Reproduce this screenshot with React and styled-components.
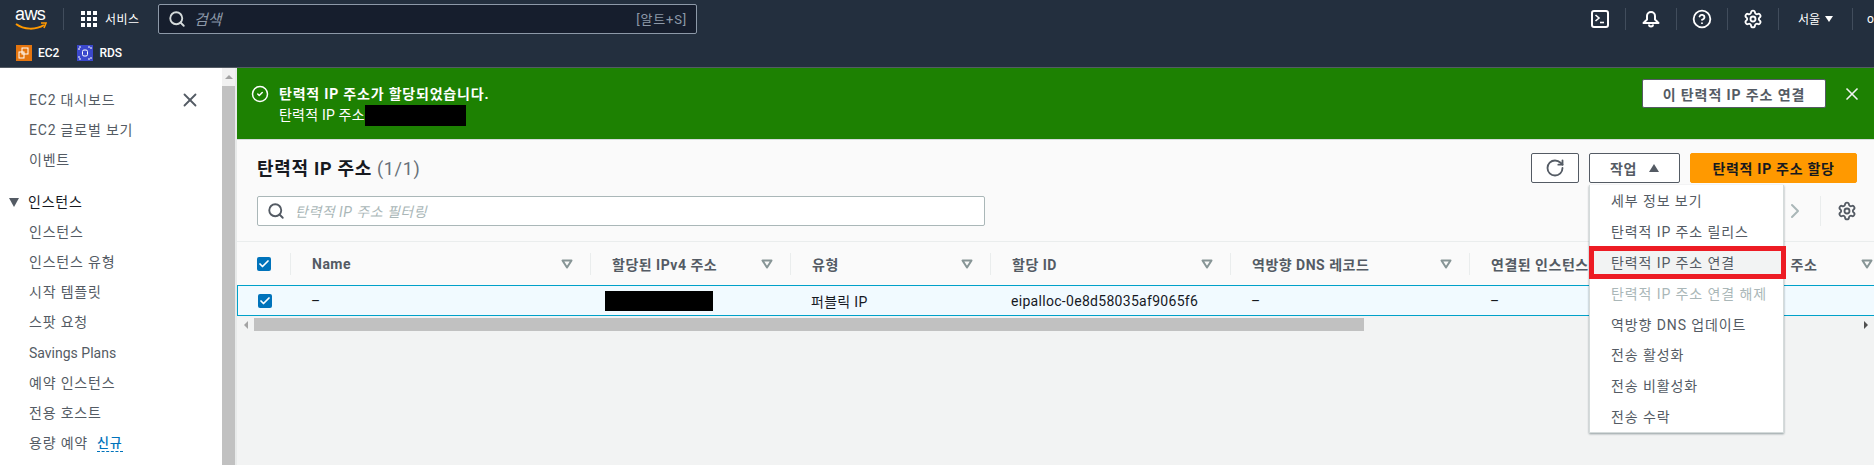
import React from "react";
import styled, { createGlobalStyle } from "styled-components";
import { Check, CircleCheck, Search, X, RotateCw, ChevronRight, Settings, CircleHelp } from "lucide-react";

const FONT = `"Roboto", "Noto Sans CJK KR", sans-serif`;
const COLUMNS = "54px 300px 200px 200px 240px 239px 224px 197px";

const Global = createGlobalStyle`
  html, body { margin: 0; padding: 0; background: #f2f3f3; overflow: hidden; }
  body { font-family: ${FONT}; font-size: 14px; color: #16191f; }
  * { box-sizing: border-box; }
`;

const Page = styled.div`
  width: 1874px;
  height: 465px;
  display: flex;
  flex-direction: column;
  overflow: hidden;
`;

/* ---------- top navigation ---------- */
const Header = styled.header`
  height: 68px;
  flex: none;
  background: #232f3e;
  display: flex;
  flex-direction: column;
`;
const TopRow = styled.div`
  height: 37px;
  display: flex;
  align-items: center;
  padding-left: 15px;
  color: #fff;
`;
const Logo = styled.div`
  position: relative;
  width: 33px;
  height: 28px;
  font: 400 18px/18px "Liberation Sans", sans-serif;
  letter-spacing: -0.6px;
  color: #fff;
  & svg { position: absolute; left: 0; top: 17px; }
`;
const VSep = styled.span`
  width: 1px;
  height: 22px;
  background: #414d5c;
  flex: none;
`;
const Grid9 = styled.div`
  display: grid;
  grid-template-columns: repeat(3, 4px);
  gap: 2px;
  margin: 0 8px 0 17px;
  & i { width: 4px; height: 4px; background: #fff; display: block; }
`;
const ServiceLabel = styled.span`
  font-size: 12px;
  letter-spacing: 0.5px;
  width: 36px;
  white-space: nowrap;
`;
const SearchBox = styled.div`
  width: 539px;
  height: 30px;
  margin-left: 17px;
  background: #161e2d;
  border: 1px solid #8d99a8;
  border-radius: 2px;
  display: flex;
  align-items: center;
  padding: 0 9px 0 9px;
`;
const SearchHint = styled.span`
  font-style: italic;
  font-size: 15px;
  color: #8d99a8;
  margin-left: 8px;
  flex: 1;
`;
const Shortcut = styled.span`
  font-size: 13px;
  color: #8d99a8;
  letter-spacing: 0.8px;
`;
const RightNav = styled.div`
  margin-left: auto;
  display: flex;
  align-items: center;
`;
const NavIcon = styled.span`
  width: 50px;
  display: flex;
  justify-content: center;
  align-items: center;
`;
const Region = styled.span`
  width: 73px;
  display: flex;
  align-items: center;
  justify-content: center;
  gap: 5px;
  font-size: 12px;
  & i {
    width: 0; height: 0;
    border-left: 4px solid transparent;
    border-right: 4px solid transparent;
    border-top: 6px solid #fff;
  }
`;
const Account = styled.span`
  width: 21px;
  font-size: 12px;
  padding-left: 14px;
  overflow: hidden;
  color: #fff;
`;
const BottomRow = styled.div`
  flex: 1;
  display: flex;
  align-items: center;
  padding-left: 16px;
  gap: 6px;
  color: #fff;
  font-size: 12px;
  font-weight: 500;
`;
const ServiceTile = styled.span`
  width: 16px;
  height: 16px;
  background: ${(p) => p.$bg};
  display: flex;
  align-items: center;
  justify-content: center;
  flex: none;
`;
const ServiceName = styled.span`
  margin-right: ${(p) => p.$mr || 0}px;
`;

/* ---------- body ---------- */
const Body = styled.div`
  flex: 1;
  display: flex;
  min-height: 0;
  border-top: 1px solid #545b64;
  margin-top: -1px;
`;
const Sidebar = styled.aside`
  width: 222px;
  flex: none;
  background: #fff;
  position: relative;
  padding: 17px 0 0 29px;
  color: #545b64;
  letter-spacing: 0.8px;
`;
const SideClose = styled.span`
  position: absolute;
  left: 179px;
  top: 21px;
  color: #545b64;
  display: flex;
`;
const SideItem = styled.div`
  height: 30.2px;
  line-height: 30px;
  white-space: nowrap;
  display: flex;
  align-items: center;
  letter-spacing: ${(p) => (p.$latin ? "0" : "inherit")};
`;
const SideGap = styled.div`
  height: 11px;
`;
const SideHead = styled(SideItem)`
  color: #16191f;
  position: relative;
  margin-left: -1px;
  & i {
    position: absolute;
    left: -19px;
    top: 11px;
    border-left: 5.5px solid transparent;
    border-right: 5.5px solid transparent;
    border-top: 9px solid #545b64;
  }
`;
const NewTag = styled.span`
  color: #0073bb;
  font-weight: 500;
  font-size: 13px;
  margin-left: 9px;
  border-bottom: 1px dashed #0073bb;
  line-height: 17px;
`;
const ScrollTrack = styled.div`
  width: 15px;
  flex: none;
  background: #fff;
  border-right: 2px solid #e8eaea;
  display: flex;
  flex-direction: column;
  align-items: flex-start;
`;
const ScrollUp = styled.span`
  height: 18px;
  width: 13px;
  background: #f1f1f1;
  display: flex;
  align-items: center;
  justify-content: center;
  & i {
    border-left: 4px solid transparent;
    border-right: 4px solid transparent;
    border-bottom: 4px solid #a3a3a3;
  }
`;
const ScrollThumb = styled.span`
  flex: 1;
  width: 13px;
  background: #c1c1c1;
`;

const Main = styled.main`
  flex: 1;
  min-width: 0;
  display: flex;
  flex-direction: column;
  position: relative;
  background: #f2f3f3;
`;
const Flash = styled.div`
  height: 72px;
  flex: none;
  background: #1d8102;
  color: #fff;
  display: flex;
  padding: 11px 0 0 14px;
  border-bottom: 1px solid #d5dbdb;
`;
const FlashText = styled.div`
  margin-left: 10px;
  line-height: 20px;
  font-size: 14px;
  letter-spacing: 0.2px;
  & strong { font-weight: 700; display: block; margin-top: 5px; letter-spacing: 0.8px; }
`;
const Redact = styled.span`
  display: inline-block;
  background: #000;
  width: ${(p) => p.$w}px;
  height: ${(p) => p.$h}px;
  margin-left: ${(p) => p.$ml || 0}px;
  vertical-align: middle;
`;
const FlashLine = styled.div`
  display: flex;
  align-items: center;
  height: 20px;
  margin-top: 1px;
`;
const FlashBtn = styled.button`
  margin-left: auto;
  margin-top: 0;
  width: 184px;
  height: 29px;
  background: #fff;
  border: 1px solid #545b64;
  border-radius: 2px;
  font: 700 14px ${FONT};
  letter-spacing: 0.9px;
  color: #545b64;
`;
const FlashClose = styled.span`
  width: 48px;
  padding: 5px 0 0 16px;
  height: 30px;
  color: #f2f3f3;
`;

const Panel = styled.section`
  background: #fafafa;
  flex: none;
`;
const Toolbar = styled.div`
  height: 102px;
  position: relative;
  padding: 0 17px 0 20px;
  border-bottom: 1px solid #eaeded;
`;
const TitleRow = styled.div`
  height: 56px;
  display: flex;
  align-items: center;
`;
const Title = styled.h1`
  margin: 0;
  font-size: 18px;
  font-weight: 700;
  color: #16191f;
  letter-spacing: 0.7px;
  position: relative;
  top: -1px;
  & span { font-weight: 400; color: #687078; margin-left: 5px; }
`;
const Actions = styled.div`
  margin-left: auto;
  display: flex;
  gap: 10px;
  align-items: center;
  position: relative;
`;
const ToolBtn = styled.button`
  width: ${(p) => p.$w}px;
  height: 30px;
  background: ${(p) => (p.$primary ? "#ff9900" : "#fff")};
  border: 1px solid ${(p) => (p.$primary ? "#ff9900" : "#545b64")};
  border-radius: 2px;
  color: ${(p) => (p.$primary ? "#16191f" : "#545b64")};
  font: 700 14px ${FONT};
  letter-spacing: 0.7px;
  display: flex;
  align-items: center;
  justify-content: center;
  gap: 12px;
  padding: 0;
  & i {
    border-left: 5.5px solid transparent;
    border-right: 5.5px solid transparent;
    border-bottom: 8px solid #545b64;
  }
`;
const Menu = styled.ul`
  position: absolute;
  z-index: 5;
  left: 58px;
  top: 32px;
  width: 195px;
  height: 248px;
  margin: 0;
  padding: 0;
  list-style: none;
  background: #fff;
  border: 1px solid #d5dbdb;
  border-top: none;
  box-shadow: 0 1px 2px rgba(0, 28, 36, 0.4);
`;
const MenuItem = styled.li`
  height: 30.8px;
  padding-left: 21px;
  display: flex;
  align-items: center;
  font-size: 14px;
  letter-spacing: 0.9px;
  white-space: nowrap;
  position: relative;
  color: ${(p) => (p.$disabled ? "#aab7b8" : "#545b64")};
  background: ${(p) => (p.$active ? "#f2f3f3" : "transparent")};
  ${(p) =>
    p.$active &&
    `&::after {
      content: "";
      position: absolute;
      left: -1px;
      right: -3px;
      top: -1px;
      bottom: -2px;
      border: 5px solid #ed1c24;
    }`}
`;
const FilterRow = styled.div`
  display: flex;
  align-items: center;
`;
const Filter = styled.div`
  width: 728px;
  height: 30px;
  background: #fff;
  border: 1px solid #aab7b8;
  border-radius: 2px;
  display: flex;
  align-items: center;
  padding-left: 9px;
  color: #545b64;
`;
const FilterHint = styled.span`
  font-style: italic;
  color: #aab7b8;
  margin-left: 10px;
  font-size: 14px;
  letter-spacing: 0.5px;
`;
const Pager = styled.div`
  margin-left: auto;
  display: flex;
  align-items: center;
  color: #aab7b8;
`;
const PagerSep = styled.span`
  width: 1px;
  height: 30px;
  background: #eaeded;
  margin: 0 16px 0 13px;
`;

const TableWrap = styled.div`
  overflow: hidden;
`;
const HeadRow = styled.div`
  display: grid;
  grid-template-columns: ${COLUMNS};
  height: 44px;
  align-items: center;
  background: #fafafa;
  border-bottom: 1px solid #eaeded;
`;
const HeadCell = styled.div`
  height: 22px;
  border-right: 1px solid #eaeded;
  padding: 0 17px 0 21px;
  display: flex;
  align-items: center;
  justify-content: space-between;
  font-weight: 700;
  color: #545b64;
  letter-spacing: 0.5px;
  white-space: nowrap;
  overflow: hidden;
  & svg { flex: none; }
`;
const CheckCell = styled.div`
  display: flex;
  align-items: center;
  padding-left: 20px;
  height: 22px;
  border-right: ${(p) => (p.$divider ? "1px solid #eaeded" : "none")};
`;
const CheckBox = styled.span`
  width: 14px;
  height: 14px;
  border-radius: 2px;
  background: #0073bb;
  color: #fff;
  display: flex;
  align-items: center;
  justify-content: center;
`;
const BodyRow = styled.div`
  display: grid;
  grid-template-columns: ${COLUMNS};
  height: 31px;
  margin-top: -1px;
  align-items: center;
  background: #f1faff;
  border-top: 1px solid #00a1c9;
  border-bottom: 1px solid #00a1c9;
  border-left: 1px solid #00a1c9;
`;
const BodyCell = styled.div`
  padding-left: 19px;
  color: #16191f;
  letter-spacing: 0.3px;
  white-space: nowrap;
`;
const HScroll = styled.div`
  height: 15px;
  margin-top: 1px;
  display: flex;
  align-items: center;
`;
const HArrow = styled.span`
  width: 17px;
  display: flex;
  justify-content: center;
  & i {
    border-top: 4px solid transparent;
    border-bottom: 4px solid transparent;
    ${(p) => (p.$right ? "border-left: 4px solid #505050;" : "border-right: 4px solid #a3a3a3;")}
  }
`;
const HThumb = styled.span`
  width: 1110px;
  height: 13px;
  background: #c1c1c1;
`;
const HFill = styled.span`
  flex: 1;
`;
const Rest = styled.div`
  flex: 1;
  background: #f2f3f3;
`;

const SortIcon = () => (
  <svg width="12" height="10" viewBox="0 0 12 10">
    <path d="M1.5 1.5h9L6 8.5z" fill="none" stroke="#879596" strokeWidth="2" strokeLinejoin="round" />
  </svg>
);
const Ec2Glyph = () => (
  <svg width="12" height="12" viewBox="0 0 12 12" fill="none" stroke="#fff" strokeWidth="1">
    <rect x="1" y="5" width="5" height="6" />
    <rect x="4" y="1" width="6" height="6" />
  </svg>
);
const RdsGlyph = () => (
  <svg width="14" height="14" viewBox="0 0 14 14" fill="none" stroke="#fff" strokeWidth="1">
    <rect x="4.5" y="4" width="5" height="6" rx="1.5" />
    <path d="M1 4V1h3M10 1h3v3M1 10v3h3M10 13h3v-3" strokeDasharray="2 1" />
  </svg>
);
const TerminalIcon = () => (
  <svg width="18" height="18" viewBox="0 0 18 18" fill="none" stroke="#fff" strokeWidth="2">
    <rect x="1" y="1" width="16" height="16" rx="2" />
    <path d="M4.5 5l3.5 3-3.5 3" strokeWidth="1.6" />
    <path d="M9 12.5h4" strokeWidth="1.6" />
  </svg>
);
const BellIcon = () => (
  <svg width="18" height="18" viewBox="0 0 18 18" fill="none" stroke="#fff" strokeWidth="2" strokeLinejoin="round">
    <path d="M9 2a4 4 0 0 0-4 4v3.5L1.5 13h15L13 9.5V6a4 4 0 0 0-4-4z" />
    <path d="M7 14.5a2 2 0 0 0 4 0" />
  </svg>
);

const sideTop = ["EC2 대시보드", "EC2 글로벌 보기", "이벤트"];
const sideInst = ["인스턴스", "인스턴스 유형", "시작 템플릿", "스팟 요청", "Savings Plans", "예약 인스턴스", "전용 호스트"];
const menu = [
  { t: "세부 정보 보기" },
  { t: "탄력적 IP 주소 릴리스" },
  { t: "탄력적 IP 주소 연결", active: true },
  { t: "탄력적 IP 주소 연결 해제", disabled: true },
  { t: "역방향 DNS 업데이트" },
  { t: "전송 활성화" },
  { t: "전송 비활성화" },
  { t: "전송 수락" },
];
const heads = ["Name", "할당된 IPv4 주소", "유형", "할당 ID", "역방향 DNS 레코드", "연결된 인스턴스 ID", "프라이빗 IP 주소"];

export default function App() {
  return (
    <Page>
      <Global />
      <Header>
        <TopRow>
          <Logo>
            aws
            <svg width="32" height="10" viewBox="0 0 32 10" fill="none">
              <path d="M1 2c8 6 20 6 28 1" stroke="#ff9900" strokeWidth="2" />
              <path d="M26 1h5l-2 5" stroke="#ff9900" strokeWidth="1.6" />
            </svg>
          </Logo>
          <VSep style={{ marginLeft: 15 }} />
          <Grid9>{Array.from({ length: 9 }, (_, i) => <i key={i} />)}</Grid9>
          <ServiceLabel>서비스</ServiceLabel>
          <SearchBox>
            <Search size={18} color="#d5dbdb" strokeWidth={2.5} />
            <SearchHint>검색</SearchHint>
            <Shortcut>[알트+S]</Shortcut>
          </SearchBox>
          <RightNav>
            <NavIcon><TerminalIcon /></NavIcon>
            <VSep />
            <NavIcon><BellIcon /></NavIcon>
            <VSep />
            <NavIcon><CircleHelp size={20} color="#fff" strokeWidth={2.2} /></NavIcon>
            <VSep />
            <NavIcon><Settings size={20} color="#fff" strokeWidth={2.2} /></NavIcon>
            <VSep />
            <Region>서울<i /></Region>
            <VSep />
            <Account>o</Account>
          </RightNav>
        </TopRow>
        <BottomRow>
          <ServiceTile $bg="#e4750f"><Ec2Glyph /></ServiceTile>
          <ServiceName $mr={12}>EC2</ServiceName>
          <ServiceTile $bg="#3b48cc"><RdsGlyph /></ServiceTile>
          <ServiceName>RDS</ServiceName>
        </BottomRow>
      </Header>
      <Body>
        <Sidebar>
          <SideClose><X size={22} strokeWidth={2} /></SideClose>
          {sideTop.map((s) => <SideItem key={s}>{s}</SideItem>)}
          <SideGap />
          <SideHead><i />인스턴스</SideHead>
          {sideInst.map((s) => <SideItem key={s} $latin={s === "Savings Plans"}>{s}</SideItem>)}
          <SideItem>용량 예약<NewTag>신규</NewTag></SideItem>
        </Sidebar>
        <ScrollTrack>
          <ScrollUp><i /></ScrollUp>
          <ScrollThumb />
        </ScrollTrack>
        <Main>
          <Flash>
            <CircleCheck size={18} strokeWidth={2} style={{ marginTop: 6 }} />
            <FlashText>
              <strong>탄력적 IP 주소가 할당되었습니다.</strong>
              <FlashLine>탄력적 IP 주소<Redact $w={101} $h={21} /></FlashLine>
            </FlashText>
            <FlashBtn>이 탄력적 IP 주소 연결</FlashBtn>
            <FlashClose><X size={20} strokeWidth={2} /></FlashClose>
          </Flash>
          <Panel>
            <Toolbar>
              <TitleRow>
                <Title>탄력적 IP 주소<span>(1/1)</span></Title>
                <Actions>
                  <ToolBtn $w={48}><RotateCw size={20} strokeWidth={2.2} /></ToolBtn>
                  <ToolBtn $w={91}>작업<i /></ToolBtn>
                  <ToolBtn $w={167} $primary>탄력적 IP 주소 할당</ToolBtn>
                  <Menu>
                    {menu.map((m) => (
                      <MenuItem key={m.t} $active={m.active} $disabled={m.disabled}>{m.t}</MenuItem>
                    ))}
                  </Menu>
                </Actions>
              </TitleRow>
              <FilterRow>
                <Filter>
                  <Search size={18} strokeWidth={2.5} />
                  <FilterHint>탄력적 IP 주소 필터링</FilterHint>
                </Filter>
                <Pager>
                  <ChevronRight size={24} strokeWidth={2} />
                  <PagerSep />
                  <Settings size={20} color="#545b64" strokeWidth={2.2} />
                </Pager>
              </FilterRow>
            </Toolbar>
            <TableWrap>
              <HeadRow>
                <CheckCell $divider>
                  <CheckBox><Check size={12} strokeWidth={3.5} /></CheckBox>
                </CheckCell>
                {heads.map((h) => (
                  <HeadCell key={h}>{h}<SortIcon /></HeadCell>
                ))}
              </HeadRow>
              <BodyRow>
                <CheckCell>
                  <CheckBox><Check size={12} strokeWidth={3.5} /></CheckBox>
                </CheckCell>
                <BodyCell>–</BodyCell>
                <BodyCell><Redact $w={108} $h={20} $ml={-6} /></BodyCell>
                <BodyCell>퍼블릭 IP</BodyCell>
                <BodyCell>eipalloc-0e8d58035af9065f6</BodyCell>
                <BodyCell>–</BodyCell>
                <BodyCell>–</BodyCell>
                <BodyCell>–</BodyCell>
              </BodyRow>
            </TableWrap>
          </Panel>
          <HScroll>
            <HArrow><i /></HArrow>
            <HThumb />
            <HFill />
            <HArrow $right><i /></HArrow>
          </HScroll>
          <Rest />
        </Main>
      </Body>
    </Page>
  );
}
